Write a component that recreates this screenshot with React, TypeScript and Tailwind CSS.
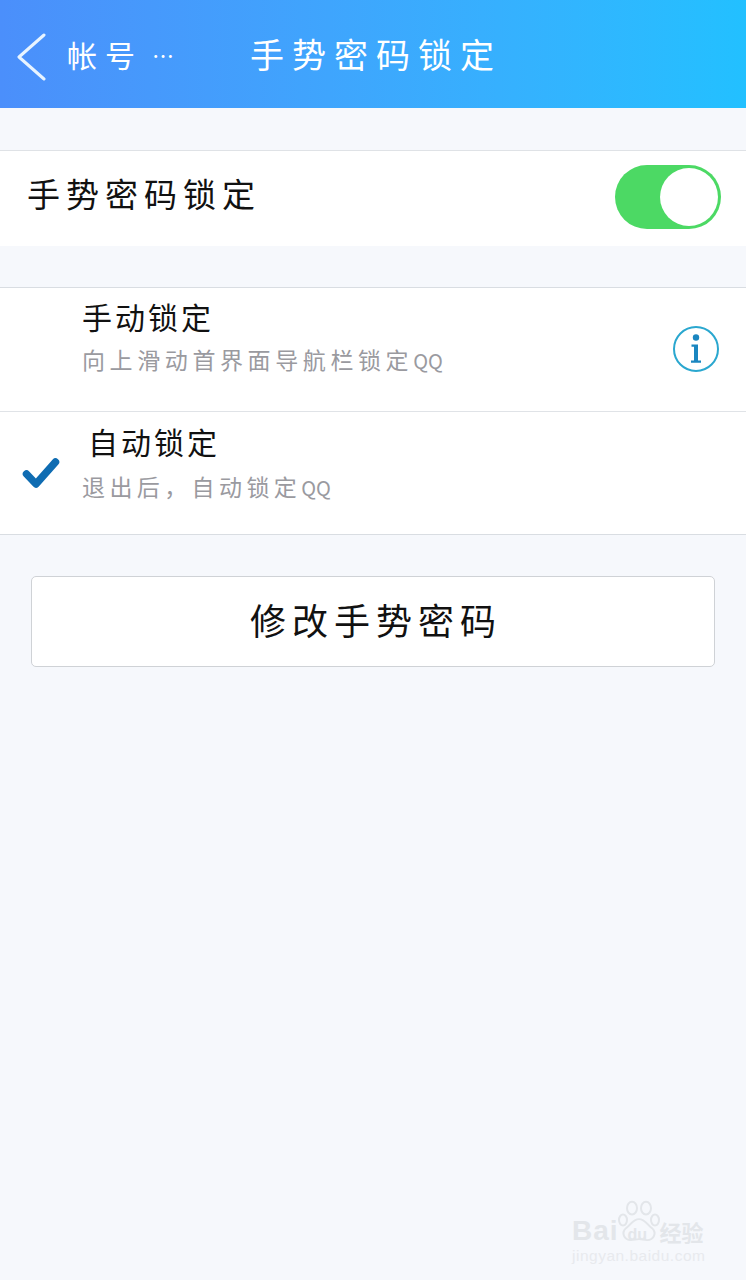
const cjk = { fontFamily: '"Noto Sans CJK SC", "Noto Sans", sans-serif' }
const latin = { fontFamily: '"Liberation Sans", sans-serif' }

function Toggle() {
  return (
    <div className="flex h-[64px] w-[106px] items-center justify-end rounded-full bg-[#4cd964] pr-[3px]">
      <div className="h-[58px] w-[58px] rounded-full bg-white" />
    </div>
  )
}

function BackIcon() {
  return (
    <svg width="46" height="60" viewBox="0 0 46 60" fill="none" className="shrink-0">
      <path d="M44 11 L19 33 L44 55" stroke="#e8f4ff" strokeWidth="3" strokeLinecap="round" strokeLinejoin="round" />
    </svg>
  )
}

function InfoIcon() {
  return (
    <svg width="48" height="48" viewBox="0 0 48 48" fill="none">
      <circle cx="24" cy="24" r="22" stroke="#2aa7cf" strokeWidth="2" />
      <circle cx="24" cy="12.5" r="3.2" fill="#1a86c0" />
      <path d="M19.5 19.5h6.5v16h3v2.2h-10v-2.2h3v-13.8h-2.5z" fill="#1a86c0" />
    </svg>
  )
}

function CheckIcon() {
  return (
    <svg width="38" height="32" viewBox="0 0 38 32" fill="none">
      <path d="M4.5 17 L14 27 L33.5 5" stroke="#0f6cb2" strokeWidth="7.5" strokeLinecap="round" strokeLinejoin="round" />
    </svg>
  )
}

function Watermark() {
  return (
    <div className="absolute left-[572px] top-[1199px] w-[140px] text-[#e3e6ea]">
      <div className="flex items-end whitespace-nowrap">
        <span className="text-[28px] font-bold leading-[24px] tracking-[1px]" style={latin}>Bai</span>
        <div className="relative ml-[-2px] h-[44px] w-[44px] shrink-0">
          <svg width="44" height="42" viewBox="0 0 44 46" preserveAspectRatio="none" fill="none" stroke="currentColor" strokeWidth="2">
            <ellipse cx="6" cy="23" rx="4" ry="6" />
            <ellipse cx="15" cy="10" rx="5" ry="7" />
            <ellipse cx="29" cy="10" rx="5" ry="7" />
            <ellipse cx="38" cy="23" rx="4" ry="6" />
            <path d="M22 22c-6 0-8 6-13 10-5 5-2 13 5 13 3 0 5-1 8-1s5 1 8 1c7 0 10-8 5-13-5-4-7-10-13-10z" />
          </svg>
          <span className="absolute left-[11px] top-[27px] text-[16px] font-bold leading-[18px]" style={latin}>du</span>
        </div>
        <span className="ml-[-1px] shrink-0 text-[22px] font-bold leading-[24px]" style={cjk}>经验</span>
      </div>
      <p className="mt-[4px] whitespace-nowrap text-[15.5px] leading-[18px] tracking-[0.5px] text-[#e8eaee]" style={latin}>jingyan.baidu.com</p>
    </div>
  )
}

export default function App() {
  return (
    <div className="relative min-h-[1280px] w-[746px] overflow-hidden bg-[#f6f8fc]" style={cjk}>
      <header className="flex h-[108px] items-center bg-gradient-to-r from-[#4b8ffb] to-[#22c0ff] text-white">
        <BackIcon />
        <span className="ml-[21px] text-[30px] leading-none tracking-[8px]">帐号</span>
        <span className="ml-[9px] text-[22px] leading-none">…</span>
        <span className="ml-[76px] text-[34px] leading-none tracking-[8px]">手势密码锁定</span>
      </header>

      <section className="mt-[42px] flex h-[96px] items-center justify-between border-t border-[#dfe2e6] bg-white pb-[4px] pl-[27px] pr-[25px]">
        <span className="mb-[6px] text-[33px] leading-none tracking-[6px] text-[#111]">手势密码锁定</span>
        <Toggle />
      </section>

      <section className="mt-[41px] border-y border-[#d9dde2] bg-white">
        <div className="flex h-[124px] items-center border-b border-[#e0e3e7] pl-[82px] pr-[26px]">
          <div className="mb-[25px] flex-1">
            <p className="text-[30px] leading-[36px] tracking-[3px] text-[#111]">手动锁定</p>
            <p className="mt-[10px] text-[23px] leading-[30px] tracking-[4.6px] text-[#9a9a9f]">
              向上滑动首界面导航栏锁定<span className="text-[20px] tracking-normal">QQ</span>
            </p>
          </div>
          <div className="mb-[2px]"><InfoIcon /></div>
        </div>
        <div className="flex h-[122px] items-center pl-[22px]">
          <div className="w-[60px] shrink-0"><CheckIcon /></div>
          <div className="mb-[21px]">
            <p className="ml-[6px] text-[30px] leading-[36px] tracking-[3px] text-[#111]">自动锁定</p>
            <p className="mt-[12px] text-[23px] leading-[30px] tracking-[4.4px] text-[#9a9a9f]">
              退出后，自动锁定<span className="text-[20px] tracking-normal">QQ</span>
            </p>
          </div>
        </div>
      </section>

      <button className="mx-[31px] mt-[41px] flex h-[91px] w-[684px] items-center justify-center rounded-[5px] border border-[#cfd2d6] bg-white pb-[6px] pl-[6px] text-[36px] leading-none tracking-[6px] text-[#111]">
        修改手势密码
      </button>

      <Watermark />
    </div>
  )
}
